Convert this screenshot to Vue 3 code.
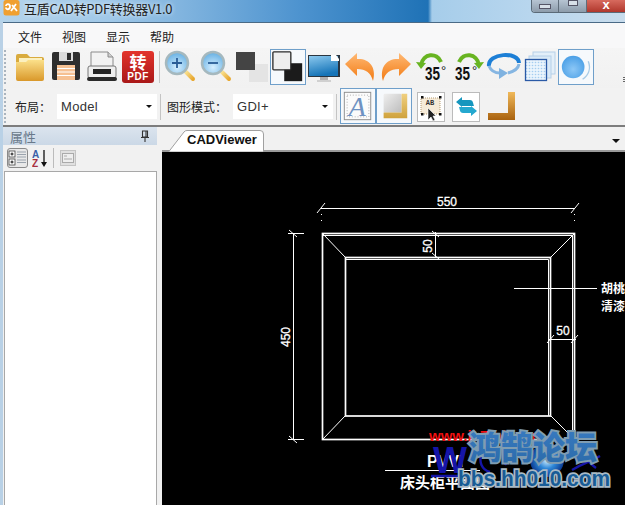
<script setup>
const menus = ['文件', '视图', '显示', '帮助']
</script>

<template>
  <div class="window">
    <header class="titlebar">
      <svg class="app-logo" width="17" height="16" viewBox="0 0 17 16">
        <rect x="0.5" y="0" width="16" height="15.5" rx="2.5" fill="#f0a030" />
        <path d="M3 6 C3 3.5 7 3.5 7 6.5 C7 10 3 10 3 7.500 M8 11 L13 4 M9 5 L14 11" fill="none" stroke="#fff" stroke-width="1.8" />
      </svg>
      <span class="title-text">互盾CAD转PDF转换器V1.0</span>
      <div class="caption">
        <span class="cap cap-min"><i></i></span>
        <span class="cap cap-max"><i></i></span>
        <span class="cap cap-close">x</span>
      </div>
    </header>

    <div class="client">
      <nav class="menubar">
        <span v-for="m in menus" :key="m" class="menu">{{ m }}</span>
      </nav>

      <div class="toolbar tb1">
        <span class="grip"></span>
        <!-- folder -->
        <span class="cell">
          <svg viewBox="0 0 36 36" width="36" height="36">
            <defs>
              <linearGradient id="fold" x1="0" y1="0" x2="0" y2="1"><stop offset="0" stop-color="#fbe08a" /><stop offset="1" stop-color="#d9982a" /></linearGradient>
            </defs>
            <path d="M4 7 q0-2 2-2 h9 l3 3 h12 q2 0 2 2 v6 H4z" fill="#d9ab3e" />
            <rect x="7" y="9" width="23" height="6" fill="#fbf0c0" />
            <path d="M4 13 h10 l2-2 h16 v19 q0 2-2 2 H6 q-2 0-2-2z" fill="url(#fold)" />
          </svg>
        </span>
        <!-- save -->
        <span class="cell">
          <svg viewBox="0 0 36 36" width="36" height="36">
            <rect x="4" y="3" width="28" height="28" rx="2" fill="#2e2e2e" />
            <rect x="11" y="3" width="14" height="9" fill="#dcdcdc" />
            <rect x="19" y="4" width="4" height="7" fill="#2e2e2e" />
            <rect x="9" y="16" width="18" height="15" fill="#f6c193" />
            <path d="M9 19.500 h18 M9 23 h18 M9 26.500 h18" stroke="#fff" stroke-width="1.2" />
          </svg>
        </span>
        <!-- printer -->
        <span class="cell">
          <svg viewBox="0 0 36 36" width="36" height="36">
            <path d="M7 3 h17 l5 5 v14 H7z" fill="#f2f2f2" stroke="#8a8a8a" />
            <path d="M24 3 v5 h5" fill="#cfcfcf" stroke="#8a8a8a" />
            <rect x="4" y="17" width="28" height="12" rx="2" fill="#eeeeee" stroke="#777" />
            <rect x="9" y="20" width="18" height="5" fill="#252525" />
            <rect x="3" y="28" width="30" height="4" rx="2" fill="#2b2b2b" />
          </svg>
        </span>
        <!-- to pdf -->
        <span class="cell">
          <svg viewBox="0 0 36 36" width="36" height="36">
            <defs>
              <linearGradient id="red" x1="0" y1="0" x2="0" y2="1"><stop offset="0" stop-color="#e3342c" /><stop offset="1" stop-color="#a91818" /></linearGradient>
            </defs>
            <rect x="2" y="2" width="32" height="32" rx="3" fill="url(#red)" />
            <text x="18" y="20" text-anchor="middle" class="t-zhuan">转</text>
            <text x="18" y="31" text-anchor="middle" class="t-pdf">PDF</text>
          </svg>
        </span>
        <span class="sep sep1"></span>
        <!-- zoom in -->
        <span class="cell">
          <svg viewBox="0 0 36 36" width="36" height="36">
            <defs>
              <radialGradient id="lens" cx="0.5" cy="0.7" r="0.7"><stop offset="0" stop-color="#d7efff" /><stop offset="1" stop-color="#62aee2" /></radialGradient>
              <linearGradient id="handle" x1="0" y1="0" x2="1" y2="1"><stop offset="0" stop-color="#f8e090" /><stop offset="1" stop-color="#e8a830" /></linearGradient>
            </defs>
            <path d="M24 23 L31 30" stroke="url(#handle)" stroke-width="4" stroke-linecap="round" />
            <circle cx="15" cy="14" r="11" fill="url(#lens)" stroke="#a5b8be" stroke-width="2.500" />
            <path d="M10 14 h10 M15 9 v10" stroke="#2a5d96" stroke-width="1.800" />
          </svg>
        </span>
        <!-- zoom out -->
        <span class="cell">
          <svg viewBox="0 0 36 36" width="36" height="36">
            <path d="M24 23 L31 30" stroke="url(#handle)" stroke-width="4" stroke-linecap="round" />
            <circle cx="15" cy="14" r="11" fill="url(#lens)" stroke="#a5b8be" stroke-width="2.500" />
            <path d="M10 14 h10" stroke="#2a5d96" stroke-width="1.800" />
          </svg>
        </span>
        <!-- squares -->
        <span class="cell">
          <svg viewBox="0 0 36 36" width="36" height="36">
            <rect x="15" y="15" width="19" height="18" fill="#e4e4e4" />
            <rect x="2" y="3" width="19" height="18" fill="#444444" />
          </svg>
        </span>
        <!-- squares selected -->
        <span class="cell on">
          <svg viewBox="0 0 36 36" width="34" height="34">
            <rect x="14" y="14" width="19" height="19" fill="#1b1b1b" />
            <rect x="2" y="2" width="19" height="19" rx="1" fill="#eeeeee" stroke="#2a2a2a" stroke-width="1.400" />
          </svg>
        </span>
        <!-- monitor -->
        <span class="cell">
          <svg viewBox="0 0 36 36" width="36" height="36">
            <defs>
              <linearGradient id="scr" x1="0" y1="0" x2="0.300" y2="1"><stop offset="0" stop-color="#8cc9ee" /><stop offset="1" stop-color="#1574b8" /></linearGradient>
            </defs>
            <rect x="2" y="6" width="32" height="22" fill="#2a3540" />
            <rect x="3" y="7" width="29" height="20" fill="url(#scr)" />
            <path d="M25 6 h5 l3 4 v2 h-8z" fill="#fff" />
            <rect x="14" y="28" width="8" height="3" fill="#b0b0b0" />
            <rect x="11" y="31" width="14" height="2" fill="#d0d0d0" />
          </svg>
        </span>
        <!-- undo -->
        <span class="cell">
          <svg viewBox="0 0 36 36" width="36" height="36">
            <defs>
              <linearGradient id="org" x1="0" y1="0" x2="0" y2="1"><stop offset="0" stop-color="#ffb974" /><stop offset="1" stop-color="#f27a12" /></linearGradient>
            </defs>
            <path d="M3 15 L15 4 V10 C26 9 35 17 31 32 C29 24 24 20 15 20 V27 Z" fill="url(#org)" />
          </svg>
        </span>
        <!-- redo -->
        <span class="cell">
          <svg viewBox="0 0 36 36" width="36" height="36">
            <path d="M33 15 L21 4 V10 C10 9 1 17 5 32 C7 24 12 20 21 20 V27 Z" fill="url(#org)" />
          </svg>
        </span>
        <!-- rotate left -->
        <span class="cell">
          <svg viewBox="0 0 36 36" width="36" height="36">
            <path d="M7 16 C9 4 23 3 27 13" fill="none" stroke="#68b421" stroke-width="4" />
            <path d="M2 13 L12 14 L7 20 Z" fill="#68b421" />
            <text x="11" y="31" class="t-deg" textLength="15" lengthAdjust="spacingAndGlyphs">35</text>
            <text x="27" y="26" class="t-deg-o">°</text>
          </svg>
        </span>
        <!-- rotate right -->
        <span class="cell">
          <svg viewBox="0 0 36 36" width="36" height="36">
            <path d="M9 13 C13 3 27 4 29 16" fill="none" stroke="#68b421" stroke-width="4" />
            <path d="M34 13 L24 14 L29 20 Z" fill="#68b421" />
            <text x="5" y="31" class="t-deg" textLength="15" lengthAdjust="spacingAndGlyphs">35</text>
            <text x="22" y="26" class="t-deg-o">°</text>
          </svg>
        </span>
        <!-- cycle -->
        <span class="cell">
          <svg viewBox="0 0 36 36" width="36" height="36">
            <path d="M3 17 C1 4 33 2 33 14" fill="none" stroke="#1d7fd6" stroke-width="4" />
            <path d="M33 15 C32 21 26 23 22 24 M3 17 C5 22 10 24 14 24" fill="none" stroke="#86b6e2" stroke-width="3" />
            <path d="M13 19 L22 24 L13 30 Z" fill="#7fb2e0" />
          </svg>
        </span>
        <!-- layers -->
        <span class="cell">
          <svg viewBox="0 0 36 36" width="36" height="36">
            <defs>
              <pattern id="dots" width="3" height="3" patternUnits="userSpaceOnUse"><rect width="3" height="3" fill="#eaf4fc" /><circle cx="1.500" cy="1.500" r="0.800" fill="#a5cdf0" /></pattern>
            </defs>
            <rect x="11" y="3" width="22" height="22" fill="#e3eff9" stroke="#b6d0e8" />
            <rect x="7" y="7" width="22" height="22" fill="#d9e9f7" stroke="#b6d0e8" />
            <rect x="3.500" y="10.500" width="21" height="21" fill="url(#dots)" stroke="#2b5aa6" stroke-width="1.300" />
          </svg>
        </span>
        <!-- circle selected -->
        <span class="cell on">
          <svg viewBox="0 0 36 36" width="34" height="34">
            <defs>
              <radialGradient id="ball" cx="0.5" cy="0.6" r="0.6"><stop offset="0" stop-color="#8cc7f6" /><stop offset="1" stop-color="#4a9fe6" /></radialGradient>
            </defs>
            <circle cx="15" cy="18" r="12" fill="url(#ball)" />
            <path d="M31 12 C34 20 31 27 25 31" fill="none" stroke="#a8cbe6" stroke-width="1.500" />
          </svg>
        </span>
        <span class="endgrip"></span>
      </div>

      <div class="toolbar tb2">
        <span class="grip"></span>
        <label class="lbl lbl1">布局：</label>
        <div class="combo"><span>Model</span><i class="caret"></i></div>
        <span class="sep sep2"></span>
        <label class="lbl lbl2">图形模式：</label>
        <div class="combo"><span>GDI+</span><i class="caret"></i></div>
        <span class="sep sep3"></span>
        <!-- A -->
        <span class="cell on">
          <svg viewBox="0 0 36 36" width="34" height="34">
            <rect x="3.500" y="3.500" width="28" height="29" fill="#fbfbfb" stroke="#8c8c8c" />
            <rect x="6.500" y="6.500" width="23" height="23" fill="none" stroke="#aaa" stroke-dasharray="1 2" />
            <text x="17" y="29" text-anchor="middle" class="t-a">A</text>
          </svg>
        </span>
        <!-- paper -->
        <span class="cell on">
          <svg viewBox="0 0 36 36" width="34" height="34">
            <defs>
              <linearGradient id="gry" x1="0" y1="0" x2="1" y2="1"><stop offset="0" stop-color="#efefef" /><stop offset="1" stop-color="#bdbdbd" /></linearGradient>
              <linearGradient id="gold" x1="0" y1="0" x2="0" y2="1"><stop offset="0" stop-color="#f0d080" /><stop offset="1" stop-color="#cfa23c" /></linearGradient>
            </defs>
            <rect x="7" y="5" width="19" height="20" rx="1.500" fill="url(#gry)" />
            <path d="M26 5 h6 v26 H7 v-6 h19z" fill="url(#gold)" />
          </svg>
        </span>
        <!-- AB select -->
        <span class="cell">
          <svg viewBox="0 0 36 36" width="36" height="36">
            <rect x="5.500" y="4.500" width="27" height="29" fill="#fff" stroke="#bbb" />
            <rect x="9" y="10" width="19" height="16" fill="#f6ebd8" stroke="#b59b70" stroke-dasharray="1 1" />
            <text x="18" y="17" text-anchor="middle" class="t-ab">AB</text>
            <path d="M9 8 h2.500 v2.500 H9z M27 8 h2.500 v2.500 H27z M9 25 h2.500 v2.500 H9z M27 25 h2.500 v2.500 H27z" fill="#111" />
            <path d="M16 20 L16 32 L19 29 L21 33 L23 32 L21 28 L24 28 Z" fill="#222" stroke="#fff" stroke-width="0.600" />
          </svg>
        </span>
        <!-- swap -->
        <span class="cell">
          <svg viewBox="0 0 36 36" width="36" height="36">
            <rect x="4.500" y="4.500" width="27" height="29" fill="#fff" stroke="#bbb" />
            <path d="M8 14 L14 9 V12 H22 C25 12 25 15 26 18 H14 V19 Z" fill="#1596be" />
            <path d="M29 23 L23 28 V25 H15 C12 25 12 22 11 19 H23 V18 Z" fill="#25a8cf" />
          </svg>
        </span>
        <!-- L -->
        <span class="cell">
          <svg viewBox="0 0 36 36" width="36" height="36">
            <defs>
              <linearGradient id="brn" x1="0" y1="0" x2="0" y2="1"><stop offset="0" stop-color="#f0b95a" /><stop offset="1" stop-color="#a9620f" /></linearGradient>
            </defs>
            <path d="M24 4 h7 v28 H4 v-7 h20z" fill="url(#brn)" />
          </svg>
        </span>
      </div>

      <div class="body">
        <aside class="panel">
          <div class="panel-head">
            <span>属性</span>
            <svg class="pin" width="10" height="12" viewBox="0 0 10 12">
              <path d="M2.500 1 h5 v6 h-5z M1 7.500 h8 M5 7.500 V12 M6 1.500 v5" fill="none" stroke="#333" stroke-width="1.100" />
            </svg>
          </div>
          <div class="panel-tools">
            <span class="tool-on">
              <svg width="19" height="18" viewBox="0 0 19 18">
                <rect x="1" y="2" width="6" height="6" fill="#fff" stroke="#444" stroke-width="0.800" />
                <rect x="1" y="10" width="6" height="6" fill="#fff" stroke="#444" stroke-width="0.800" />
                <path d="M2.500 5 h3 M4 3.500 v3 M2.500 13 h3 M4 11.500 v3" stroke="#111" />
                <path d="M9 3 h9 M9 5.500 h9 M9 8 h9 M9 11 h9 M9 13.500 h9" stroke="#9aa3ad" />
              </svg>
            </span>
            <svg class="az" width="16" height="19" viewBox="0 0 16 19">
              <text x="0" y="8.500" class="t-az-a">A</text>
              <text x="0" y="18" class="t-az-z">Z</text>
              <path d="M12 1 V15" stroke="#111" stroke-width="1.300" />
              <path d="M9 13 h6 L12 18z" fill="#111" />
            </svg>
            <span class="tool-sep"></span>
            <svg class="prop" width="16" height="16" viewBox="0 0 16 16">
              <rect x="0.500" y="0.500" width="15" height="15" fill="#e0e0e0" stroke="#c4c4c4" />
              <rect x="2.500" y="3.500" width="11" height="9" fill="#eeeeee" stroke="#aaa" />
              <path d="M4 6 h3 M4 9 h8" stroke="#aaa" />
            </svg>
          </div>
          <div class="panel-list"></div>
        </aside>

        <section class="viewer">
          <div class="tabstrip">
            <div class="tab">
              <svg class="tab-shape" width="97" height="22" viewBox="0 0 97 22">
                <path d="M0.500 22 L16 2 Q17 0.500 19 0.500 H92 Q95.500 0.500 95.500 4 V22 Z" fill="#fff" stroke="#a0a0a0" />
              </svg>
              <span class="tab-label">CADViewer</span>
            </div>
            <i class="caret strip-caret"></i>
          </div>
          <div class="canvas">
            <svg class="drawing" viewBox="162 152 463 353" width="463" height="353">
              <defs>
                <linearGradient id="wm" x1="0" y1="0" x2="0" y2="1"><stop offset="0" stop-color="#3a7cc4" /><stop offset="1" stop-color="#2a6aa8" /></linearGradient>
                <radialGradient id="glow"><stop offset="0" stop-color="#d8f2ff" /><stop offset="0.500" stop-color="#2f88d8" /><stop offset="1" stop-color="#0a3a90" /></radialGradient>
              </defs>
              <!-- frame -->
              <g fill="none" stroke="#fff" stroke-width="1">
                <rect x="322.500" y="233.500" width="252" height="206" stroke-width="1.700" />
                <path d="M323 235.500 H572.500 V438" />
                <rect x="345.500" y="257.500" width="205" height="158.500" stroke-width="1.700" />
                <path d="M346 259.500 H548.500 V416" />
                <path d="M323 234 L345 257 M574 234 L551 257 M323 439 L345 416 M574 439 L551 416" />
                <!-- dimensions -->
                <path d="M321 208.500 H575 M317 213 L325 203 M571 213 L579 203" />
                <path d="M321.500 214 V225 M574.500 214 V225" stroke-dasharray="1 5" />
                <path d="M293.500 233 V439 M288 233.500 H304 M288 439.500 H304 M289 230 L297 237 M289 436 L297 443" />
                <path d="M435.500 232 V258 M432 231 L439 237 M432 253 L439 259" />
                <path d="M549 339.500 H576 M547 343 L554 335 M571 343 L578 335" />
                <path d="M514 288.500 H597" />
                <path d="M385 470.500 H480" />
              </g>
              <text x="447" y="206" text-anchor="middle" class="dim">550</text>
              <text class="dim" text-anchor="middle" transform="translate(432 246) rotate(-90)">50</text>
              <text class="dim" text-anchor="middle" transform="translate(290 337) rotate(-90)">450</text>
              <text x="563" y="335" text-anchor="middle" class="dim">50</text>
              <text x="601" y="293" class="note">胡桃</text>
              <text x="601" y="311" class="note">清漆</text>

              <text x="429" y="441" class="red">www.jx7.bjjx.cn</text>
              <text x="427" y="467" class="pv">PVVI</text>
              <text x="400" y="488" class="note cap-note">床头柜平面图</text>
              <!-- watermark -->
              <text x="433" y="473" class="bluew">W</text>
              <path d="M431 476 H470 M482 452 C478 462 482 470 490 472 M505 465 C512 452 520 452 526 462 M572 470 C585 462 590 462 600 456 M580 452 C586 458 590 464 596 468" fill="none" stroke="#1515a8" stroke-width="2.400" />
              <circle cx="547" cy="460" r="17" fill="url(#glow)" />
              <text x="469" y="459" class="wm-cn" textLength="128" lengthAdjust="spacingAndGlyphs">鸿鹄论坛</text>
              <text x="458" y="486" class="wm-en" textLength="152" lengthAdjust="spacingAndGlyphs">bbs.hh010.com</text>
            </svg>
          </div>
        </section>
      </div>
    </div>
  </div>
</template>

<style scoped>
.window {
  width: 625px;
  height: 505px;
  overflow: hidden;
  display: flex;
  flex-direction: column;
  background: #b9d1e6;
  font-family: "Noto Sans CJK SC", "Liberation Sans", sans-serif;
  color: #222;
}
.titlebar {
  height: 22px;
  flex: none;
  display: flex;
  background: linear-gradient(90deg, #b4d3ea 0, #a0c8e8 110px, #4d93cf 300px, #1f72b6 428px, #a6cdea 432px, #b8d6ee 530px, #c8dcec 625px);
  position: relative;
}
.app-logo {
  margin-left: 3px;
  flex: none;
}
.title-text {
  margin-left: 4px;
  font-size: 13px;
  line-height: 17px;
  letter-spacing: -0.3px;
  color: #222;
  text-shadow: 0 0 4px rgba(255, 255, 255, 0.9);
}
.caption {
  margin-left: auto;
  display: flex;
  height: 13px;
  box-sizing: border-box;
  border: 1px solid #5a6a78;
  border-top: none;
  border-right: none;
  border-radius: 0 0 0 4px;
  overflow: hidden;
}
.cap {
  display: flex;
  justify-content: center;
  box-sizing: border-box;
  width: 27px;
  background: linear-gradient(#b6c4d2, #8d9cab);
  border-right: 1px solid #5f6d7a;
}
.cap-max {
  width: 28px;
}
.cap i {
  display: block;
  background: #d8e0e8;
  border: 1px solid #556;
}
.cap-min i {
  width: 10px;
  height: 3px;
  margin-top: 4px;
}
.cap-max i {
  width: 8px;
  height: 4px;
  margin-top: 0;
}
.cap-close {
  width: 38px;
  border-right: none;
  background: linear-gradient(#d76a5e, #b0372c);
  color: #fff;
  font: bold 13px/10px "Liberation Sans", sans-serif;
}
.client {
  flex: 1;
  margin-left: 3px;
  min-height: 0;
  display: flex;
  flex-direction: column;
  background: #f1f1f1;
  border-top: 1px solid #4a6a86;
}
.menubar {
  height: 25px;
  flex: none;
  display: flex;
  gap: 20px;
  padding-left: 15px;
  align-items: center;
  background: #f8f8f9;
  font-size: 12px;
}
.menu {
  line-height: 25px;
  padding-top: 1px;
}
.toolbar {
  display: flex;
  flex: none;
  align-items: flex-start;
  background: #f2f2f2;
}
.tb1 {
  height: 40px;
  padding-top: 1px;
  box-sizing: border-box;
  background: linear-gradient(#f5f5f5, #f1f1f1);
}
.tb2 {
  height: 37px;
  border-bottom: 2px solid #7d7d7d;
}
.grip {
  flex: none;
  width: 8px;
  height: 34px;
  border-left: 2px dotted #aab4be;
  margin-left: 1px;
  margin-top: 1px;
  box-sizing: border-box;
}
.cell {
  flex: none;
  width: 36px;
  height: 36px;
  display: flex;
  align-items: center;
  justify-content: center;
}
.cell.on {
  border: 1px solid #6f9fca;
  background: #f6f9fc;
  box-sizing: border-box;
}
.sep {
  flex: none;
  width: 1px;
  background: #c4c4c4;
}
.sep1 {
  height: 32px;
  margin: 2px 2px 0 3px;
}
.sep2 {
  height: 26px;
  margin: 6px 6px 0 3px;
}
.sep3 {
  height: 26px;
  margin: 6px 3px 0 3px;
}
.endgrip {
  margin-left: auto;
  width: 2px;
  height: 6px;
  margin-top: 28px;
  background: repeating-linear-gradient(#666 0 1px, transparent 1px 2px);
}
.lbl {
  flex: none;
  font-size: 12px;
  line-height: 37px;
  color: #222;
}
.lbl1 {
  width: 42px;
  margin-left: 3px;
}
.lbl2 {
  width: 66px;
}
.combo {
  flex: none;
  width: 100px;
  height: 25px;
  margin-top: 6px;
  background: #fff;
  display: flex;
  align-items: center;
  justify-content: space-between;
  padding: 0 5px 0 4px;
  box-sizing: border-box;
  font: 13px "Liberation Sans", sans-serif;
  letter-spacing: 0.3px;
  color: #333;
}
.caret {
  display: block;
  width: 0;
  height: 0;
  border-left: 3px solid transparent;
  border-right: 3px solid transparent;
  border-top: 3px solid #111;
}
.body {
  flex: 1;
  min-height: 0;
  display: flex;
  background: #f1f1f1;
}
.panel {
  flex: none;
  width: 154px;
  display: flex;
  flex-direction: column;
}
.panel-head {
  height: 18px;
  flex: none;
  display: flex;
  align-items: center;
  justify-content: space-between;
  padding: 0 7px;
  background: linear-gradient(#dbe4ee, #cbd8e6);
  font-size: 13px;
  color: #69798a;
}
.pin {
  flex: none;
}
.panel-tools {
  height: 26px;
  flex: none;
  display: flex;
  align-items: center;
  padding-left: 4px;
}
.tool-on {
  display: flex;
  width: 21px;
  height: 20px;
  box-sizing: border-box;
  border: 1px solid #8a8a8a;
  border-radius: 3px;
  background: #e8e8e8;
  align-items: center;
  justify-content: center;
}
.az {
  margin-left: 4px;
}
.tool-sep {
  width: 1px;
  height: 20px;
  background: #bbb;
  margin: 0 6px 0 5px;
}
.panel-list {
  flex: 1;
  margin-left: 1px;
  background: #fff;
  border: 1px solid #a8a8a8;
  border-bottom: none;
}
.viewer {
  flex: 1;
  min-width: 0;
  margin-left: 5px;
  display: flex;
  flex-direction: column;
}
.tabstrip {
  height: 25px;
  flex: none;
  display: flex;
  align-items: flex-end;
  padding-left: 6px;
  position: relative;
  box-sizing: border-box;
  border-bottom: 2px solid #9a9a9a;
}
.tab {
  position: relative;
  width: 97px;
  height: 22px;
  margin-bottom: -2px;
}
.tab-shape {
  position: absolute;
  left: 0;
  top: 0;
}
.tab-label {
  position: relative;
  display: block;
  padding-left: 19px;
  font: bold 13px/20px "Liberation Sans", sans-serif;
  color: #111;
}
.strip-caret {
  position: absolute;
  right: 5px;
  top: 12px;
  border-left-width: 4px;
  border-right-width: 4px;
  border-top-width: 4px;
}
.canvas {
  flex: 1;
  min-height: 0;
  background: #000;
  overflow: hidden;
}
.drawing {
  display: block;
}
.t-zhuan {
  font: bold 17px "Noto Sans CJK SC", sans-serif;
  fill: #fff;
}
.t-pdf {
  font: bold 10px "Liberation Sans", sans-serif;
  letter-spacing: 0.5px;
  fill: #fff;
}
.t-deg {
  font: bold 18px "Liberation Sans", sans-serif;
  fill: #111;
}
.t-deg-o {
  font: 13px "Liberation Sans", sans-serif;
  fill: #111;
}
.t-a {
  font: italic 30px "Liberation Serif", serif;
  fill: #6f92c2;
}
.t-ab {
  font: bold 7px "Liberation Mono", monospace;
  fill: #333;
}
.t-az-a {
  font: bold 10px "Liberation Sans", sans-serif;
  fill: #3a5fa8;
}
.t-az-z {
  font: bold 10px "Liberation Sans", sans-serif;
  fill: #a83040;
}
.dim {
  font: 12px "Liberation Sans", sans-serif;
  fill: #fff;
  stroke: #fff;
  stroke-width: 0.3px;
}
.note {
  font: 700 12px "Noto Sans CJK SC", sans-serif;
  fill: #fff;
}
.cap-note {
  font-size: 15px;
}
.red {
  font: bold 15px "Liberation Sans", sans-serif;
  fill: #f01010;
}
.pv {
  font: bold 16px "Liberation Sans", sans-serif;
  fill: #fff;
}
.bluew {
  font: bold 36px "Liberation Sans", sans-serif;
  fill: #1515a8;
}
.wm-cn {
  font: 900 32px "Noto Sans CJK SC", sans-serif;
  fill: url(#wm);
  stroke: #7f9db2;
  stroke-width: 4px;
  paint-order: stroke;
}
.wm-en {
  font: bold 22px "Liberation Sans", sans-serif;
  fill: #185c96;
  stroke: #a9bac6;
  stroke-width: 3.5px;
  paint-order: stroke;
}
</style>
